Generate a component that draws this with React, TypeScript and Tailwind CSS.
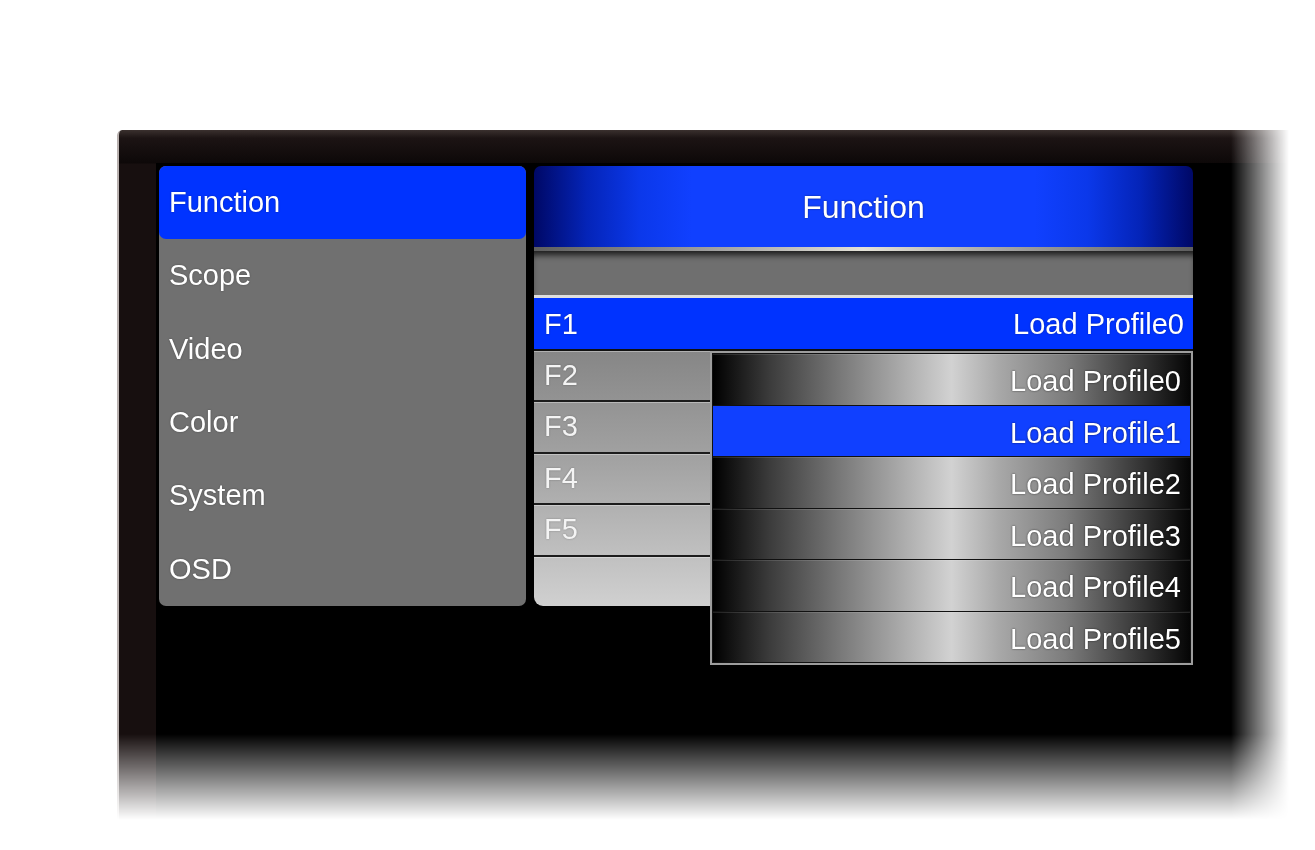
const MENU = ['Function', 'Scope', 'Video', 'Color', 'System', 'OSD'];
const F_ROWS = ['F2', 'F3', 'F4', 'F5', ''];
const PROFILES = [0, 1, 2, 3, 4, 5];

function SideMenu() {
    return (
        <div className='flex h-[440px] w-[367px] flex-col rounded-[7px] bg-[#707070]'>
            {MENU.map((item, i) => (
                <div
                    key={item}
                    className={`flex flex-1 items-center pl-[10px] text-[29px] text-white [text-shadow:0_0_2px_rgba(0,0,0,0.35)] ${i === 0 ? 'rounded-[7px] bg-[#0033ff]' : ''}`}
                >
                    {item}
                </div>
            ))}
        </div>
    );
}

function ProfileDropdown() {
    return (
        <div className='absolute left-[176px] top-[185px] flex h-[314px] w-[483px] flex-col gap-[1px] border-2 border-[#9d9d9d] bg-[#111] p-[1px]'>
            {PROFILES.map((n) => (
                <div
                    key={n}
                    className={`flex flex-1 items-center justify-end pr-[9px] pt-[5px] text-[29px] text-white [text-shadow:0_0_2px_rgba(0,0,0,0.7)] ${n === 1
                        ? 'bg-[#1040ff]'
                        : 'bg-[linear-gradient(to_right,#000_0%,#3c3c3c_12%,#7a7a7a_27%,#b4b4b4_42%,#d2d2d2_50%,#a8a8a8_60%,#7c7c7c_74%,#333_90%,#050505_100%)] shadow-[inset_0_1px_0_rgba(255,255,255,0.12)]'
                        }`}
                >
                    Load Profile{n}
                </div>
            ))}
        </div>
    );
}

function FunctionPanel() {
    return (
        <div className='relative flex h-[440px] w-[659px] flex-col'>
            {/* title bar */}
            <div className='flex h-[81px] items-center justify-center rounded-t-[7px] bg-[linear-gradient(to_right,#000866_0%,#0424b8_8%,#0b38ea_16%,#1040ff_24%,#1040ff_76%,#0b38ea_84%,#0424b8_92%,#000866_100%)] text-[32px] text-white [text-shadow:0_0_2px_rgba(0,0,0,0.5)]'>
                Function
            </div>
            <div className='h-[4px] bg-[linear-gradient(to_right,#5e5e5e,#a8a8a8_30%,#e4e2d8_50%,#a8a8a8_70%,#5e5e5e)]' />
            <div className='h-[44px] bg-[#6f6f6f] shadow-[inset_0_7px_6px_-3px_rgba(0,0,0,0.75)]' />
            <div className='h-[3px] bg-[#dedede]' />

            {/* selected function row */}
            <div className='flex h-[51px] items-center justify-between bg-[#0033ff] pl-[10px] pr-[9px] pt-[3px] text-[29px] text-white [text-shadow:0_0_2px_rgba(0,0,0,0.35)]'>
                <span>F1</span>
                <span>Load Profile0</span>
            </div>
            <div className='h-[2px] bg-[#111]' />

            {/* remaining rows */}
            <div className='flex flex-1 flex-col overflow-hidden rounded-b-[9px] bg-[linear-gradient(to_bottom,#868686,#a4a4a4_45%,#d0d0d0)]'>
                {F_ROWS.map((f, i) => (
                    <div
                        key={i}
                        className={`flex flex-1 items-center pl-[10px] text-[29px] text-[#f4f4f4] [text-shadow:0_0_2px_rgba(0,0,0,0.3)] ${i < F_ROWS.length - 1 ? 'border-b-2 border-[#1c1c1c] shadow-[inset_0_1px_0_rgba(255,255,255,0.35)]' : 'shadow-[inset_0_1px_0_rgba(255,255,255,0.35)]'}`}
                    >
                        <span>{f}</span>
                    </div>
                ))}
            </div>

            <ProfileDropdown />
        </div>
    );
}

export default function App() {
    return (
        <div className="min-h-[850px] w-[1315px] bg-white pl-[117px] pt-[130px] font-['Liberation_Sans',Arial,sans-serif]">
            {/* monitor bezel, fading out to the right and bottom */}
            <div className='h-[700px] w-[1176px] rounded-tl-[5px] border-l-2 border-[#b8b0ae] bg-[linear-gradient(to_bottom,#3a302e,#1c1414_8px,#0d0808_33px,#170f0f_34px)] pl-[37px] pt-[33px] [mask-image:linear-gradient(to_right,#000_calc(100%_-_62px),transparent_calc(100%_-_4px)),linear-gradient(to_bottom,#000_calc(100%_-_96px),transparent_calc(100%_-_10px))] [mask-composite:intersect]'>
                <div className='h-full bg-black pl-[3px] pt-[3px]'>
                    <div className='flex gap-[8px]'>
                        <SideMenu />
                        <FunctionPanel />
                    </div>
                </div>
            </div>
        </div>
    );
}
